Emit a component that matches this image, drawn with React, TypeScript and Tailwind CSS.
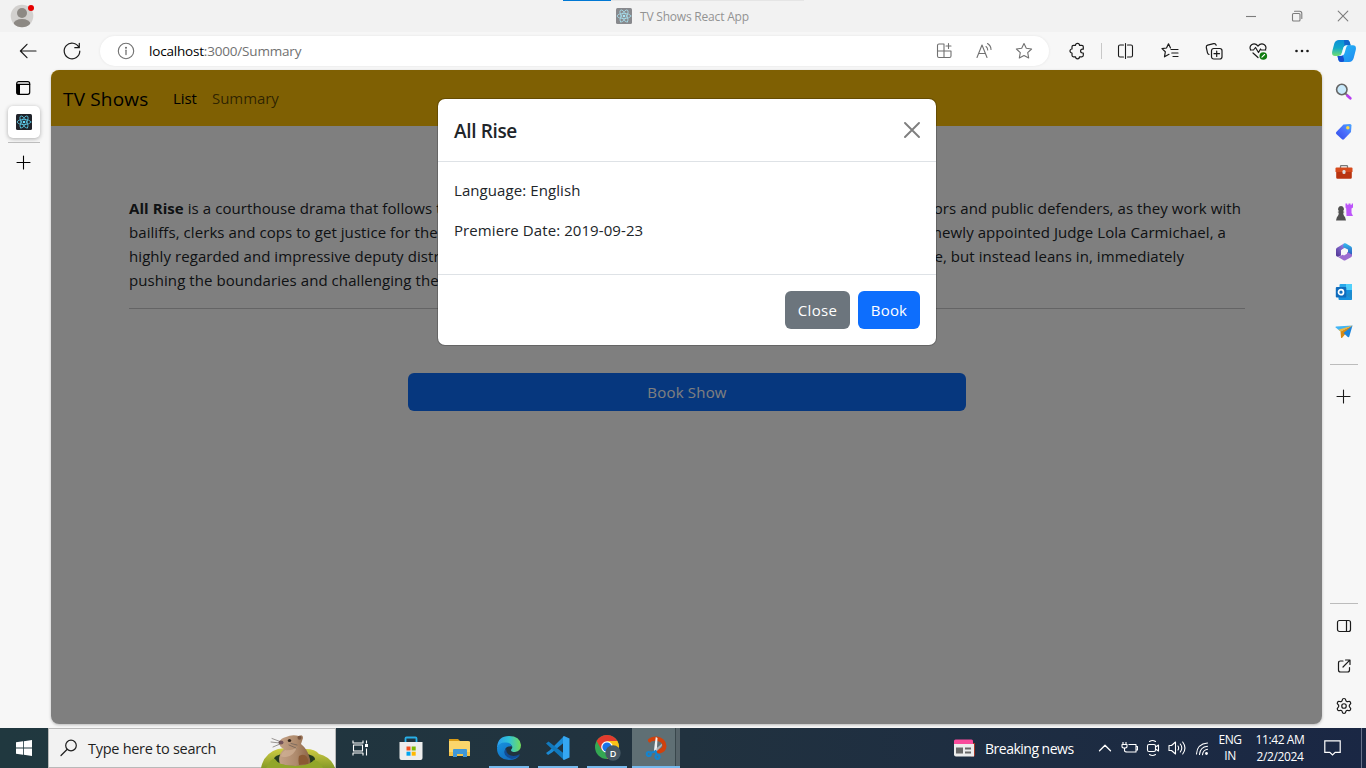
import React from "react";
import { Settings } from "lucide-react";

type IconProps = { w?: number; h?: number; vb?: string; className?: string; children: React.ReactNode };

function Icon({ w = 20, h = 20, vb, className = "", children }: IconProps) {
  return (
    <svg
      width={w}
      height={h}
      viewBox={vb ?? `0 0 ${w} ${h}`}
      fill="none"
      stroke="currentColor"
      strokeWidth={1.1}
      strokeLinecap="round"
      strokeLinejoin="round"
      className={`shrink-0 ${className}`}
    >
      {children}
    </svg>
  );
}

function ReactLogo({ className = "" }: { className?: string }) {
  return (
    <Icon w={16} h={16} className={className}>
      <rect width="16" height="16" rx="1.5" fill="#20232a" stroke="none" />
      <g stroke="#5cc8e4" strokeWidth="0.8">
        <ellipse cx="8" cy="8" rx="6.8" ry="2.6" />
        <ellipse cx="8" cy="8" rx="6.8" ry="2.6" transform="rotate(60 8 8)" />
        <ellipse cx="8" cy="8" rx="6.8" ry="2.6" transform="rotate(120 8 8)" />
      </g>
      <circle cx="8" cy="8" r="1.3" fill="#61dafb" stroke="none" />
    </Icon>
  );
}

function TitleBar() {
  return (
    <header className="relative flex h-8 shrink-0 items-center bg-[#f2f2f2]">
      <div className="absolute top-0 left-[563px] flex h-px w-[241px] bg-[#e5e5e5]">
        <div className="w-12 bg-[#0078d4]" />
      </div>
      <div className="flex w-[616px] pl-[10px]">
        <Icon w={26} h={26}>
          <g stroke="none">
            <clipPath id="face"><circle cx="12" cy="13" r="11.3" /></clipPath>
            <circle cx="12" cy="13" r="11.3" fill="#d2d0ce" />
            <g fill="#8d8984" clipPath="url(#face)">
              <circle cx="12" cy="10" r="5" />
              <ellipse cx="12" cy="21" rx="8.4" ry="5" />
            </g>
            <circle cx="21" cy="5" r="3" fill="#e60000" />
          </g>
        </Icon>
      </div>
      <ReactLogo className="opacity-50" />
      <span className="ml-2 flex-1 pt-[2px] text-[12px] leading-4 tracking-[-0.2px] text-[#929292]">TV Shows React App</span>
      <div className="flex text-[#7c7c7c]">
        <span className="flex w-[46px] justify-center"><Icon w={12} h={12}><path d="M1 6.5h10" strokeLinecap="butt" /></Icon></span>
        <span className="flex w-[46px] justify-center">
          <Icon w={12} h={12}><rect x="1.5" y="3.5" width="7.5" height="7.5" rx="1" /><path d="M3.5 1.3h5.2q2.1 0 2.1 2.1v5" /></Icon>
        </span>
        <span className="flex w-[46px] justify-center"><Icon w={12} h={12}><path d="M1.2 1.2l9.6 9.6M10.8 1.2l-9.6 9.6" /></Icon></span>
      </div>
    </header>
  );
}

function Copilot() {
  return (
    <Icon w={24} h={24}>
      <defs>
        <linearGradient id="cp1" x1="0" y1="0" x2="0" y2="1"><stop stopColor="#0d8ed8" /><stop offset=".5" stopColor="#12a9c9" /><stop offset="1" stopColor="#72dd70" /></linearGradient>
        <linearGradient id="cp2" x1="0" y1="0" x2="1" y2="1"><stop stopColor="#25bdf5" /><stop offset="1" stopColor="#2089f2" /></linearGradient>
      </defs>
      <g stroke="none">
        <path d="M7 1h8q2 0 2.600 2l1 3.500h-4q-2.300 0-3 2l-2 6q-.8 2.500-3 2.500H3Q-.8 17 .3 12l2-7.500Q3.400 1 7 1z" fill="url(#cp1)" />
        <path d="M12 1h3q2.200 0 2.800 2.200l.9 3.300h-3.200q-2.300 0-2.900 2z" fill="#1267cc" />
        <path d="M17 23H9q-2 0-2.600-2L5.500 17q3.200.5 4.300-2.500l2-6q.7-2.200 3-2.200H21q3.800 0 2.700 5l-2 7.700Q20.600 23 17 23z" fill="url(#cp2)" />
        <path d="M5.500 17q3.700.4 4.700-2.800L12 20q.7 3-2 3H9q-2 0-2.600-2z" fill="#174fd0" />
        <path d="M11.200 9.200q.9-3 3.300-3H16q-1.200.4-1.800 2.300l-1.700 5.700q-.8 2.800-3.500 2.800H6.500q2.600-.3 3.300-2.800z" fill="#f4fbff" />
      </g>
    </Icon>
  );
}

const cell = "flex w-11 shrink-0 justify-center";

function Toolbar() {
  return (
    <div className="flex h-[38px] shrink-0 items-center bg-[#f7f7f7] pl-[6px] text-[#1b1b1b]">
      <span className={cell}><Icon><path d="M2.600 10H18M9 3.300L2.400 10 9 16.700" strokeWidth="1.2" /></Icon></span>
      <span className={cell}>
        <Icon><path d="M17 6.500A7.800 7.800 0 1 0 17.800 10M17.300 2.300v4.400h-4.500" strokeWidth="1.2" /></Icon>
      </span>
      <div className="ml-[6px] flex h-[30px] w-[949px] items-center rounded-full bg-white pr-[5px] pl-4 text-[#717171] shadow-[0_0_3px_rgba(0,0,0,0.08)]">
        <Icon><circle cx="10" cy="10" r="7.700" /><path d="M10 9.200v4.300" strokeWidth="1.3" /><circle cx="10" cy="6.800" r=".5" fill="currentColor" /></Icon>
        <span className="ml-[13px] flex-1 text-[13.500px] leading-5 tracking-[-0.19px]">
          <span className="text-black">localhost</span>:3000/Summary
        </span>
        <span className="flex w-10 justify-center">
          <Icon><path d="M10 3H5Q3.500 3 3.500 4.500v10.500Q3.500 16.500 5 16.500h10.500q1.500 0 1.500-1.500v-5H3.500M10 3v13.500M14.500 2.500v5M12 5h5" /></Icon>
        </span>
        <span className="flex w-10 justify-center">
          <Icon><path d="M3 16.500L8 4l5 12.500M4.700 12.500h6.600M12 5.500q1.700 1.200 1.700 3.500M13.500 2.500q3.500 2.300 3.500 6" /></Icon>
        </span>
        <span className="flex w-10 justify-center">
          <Icon><path d="M10 2.500l2.300 4.800 5.300.7-3.900 3.700 1 5.300L10 14.500 5.300 17l1-5.300L2.400 8l5.300-.7z" /></Icon>
        </span>
      </div>
      <span className={`${cell} ml-[6px]`}>
        <Icon><path d="M6.500 4.300h2a2 2 0 0 1 4 0h2.300q1.500 0 1.500 1.500v2.400h-.8a1.900 1.900 0 0 0 0 3.800h.8v2.300q0 1.500-1.500 1.500h-2.300a2 2 0 0 1-4 0h-2Q5 15.800 5 14.300V12a2 2 0 0 1 0-4V5.800q0-1.500 1.500-1.500z" strokeWidth="1.2" /></Icon>
      </span>
      <span className="mx-[2px] h-4 w-px bg-[#c8c8c8]" />
      <span className={cell}>
        <Icon><path d="M7.500 4H4Q2.500 4 2.500 5.500v9Q2.500 16 4 16h3.500M11.500 4H15q1.500 0 1.500 1.500v9q0 1.500-1.500 1.500h-3.500M9.500 2.500v15" strokeWidth="1.1" /></Icon>
      </span>
      <span className={cell}>
        <Icon><path d="M10.500 7L8.500 2.800 6.500 7 2 7.600l3.300 3.200-.8 5L9 13.300M11 8.500h7M11.800 12h6.200M13 15.500h5" strokeWidth="1.2" /></Icon>
      </span>
      <span className={cell}>
        <Icon>
          <g strokeWidth="1.2"><rect x="7.500" y="7.500" width="10.500" height="10.500" rx="2.200" /><path d="M12.700 10v5.500M10 12.700h5.500M5 13.500q-1.200-.5-1.500-1.700L2.300 6.500q-.3-1.800 1.400-2.300l6-1.600q1.800-.4 2.500 1.600" /></g>
        </Icon>
      </span>
      <span className={cell}>
        <Icon>
          <path d="M2.700 9Q1 5.700 3.600 3.700 7 1.600 10 5q3-3.400 6.400-1.300Q19 5.700 17.300 9M2.500 9h3l2-2.500 3 5 2-3.500.7 1h4.500M5 12l5 4.500" strokeWidth="1.2" />
          <circle cx="15.300" cy="15" r="3.800" fill="#107c10" stroke="none" />
          <path d="M13.900 16.200l2.700-2.700" stroke="#fff" />
        </Icon>
      </span>
      <span className={cell}>
        <Icon><g fill="currentColor" stroke="none"><circle cx="4.500" cy="10" r="1.300" /><circle cx="10" cy="10" r="1.300" /><circle cx="15.500" cy="10" r="1.300" /></g></Icon>
      </span>
      <span className="flex w-10 justify-center"><Copilot /></span>
    </div>
  );
}

function Plus() {
  return <Icon w={16} h={16}><path d="M7.500 2v13M1 8.500h13" strokeWidth="1.100" /></Icon>;
}

function LeftRail() {
  return (
    <aside className="flex w-[51px] shrink-0 flex-col pt-2 pl-2">
      <span className="flex h-7 w-[30px] items-start justify-center pt-[2px]">
        <Icon w={16} h={16}><rect x="1.700" y="1.700" width="13" height="12.600" rx="2" strokeWidth="1.200" /><path d="M1.700 4.300h13" strokeWidth="1.200" /><path d="M1.500 4h3.500v10.500H3q-1.500 0-1.500-1.500z" fill="#000" stroke="none" /></Icon>
      </span>
      <span className="flex size-8 items-center justify-center rounded-[5px] bg-white shadow-[0_1px_4px_rgba(0,0,0,0.3)]"><ReactLogo /></span>
      <span className="mt-1 h-px w-8 bg-[#bdbdbd]" />
      <span className="mt-[11px] flex w-8 justify-center"><Plus /></span>
    </aside>
  );
}

function RightRail() {
  const row = "flex h-10 w-[27px] items-center justify-center";
  return (
    <aside className="flex w-11 shrink-0 flex-col pt-[2px] pl-2 text-[#1b1b1b]">
      <span className={row}>
        <Icon w={18} h={18}>
          <path d="M11 11l2 2" stroke="#777" strokeWidth="2" /><path d="M12.500 12.700l2.800 2.600" stroke="#b83ff0" strokeWidth="2.800" />
          <circle cx="6.800" cy="6.500" r="5.200" fill="#c8e9fb" stroke="#666" strokeWidth="1.600" />
        </Icon>
      </span>
      <span className={row}>
        <Icon w={18} h={18}>
          <defs><linearGradient id="tag" x1="0" y1="1" x2="1" y2="0"><stop stopColor="#2d4ee8" /><stop offset=".5" stopColor="#4b6bfa" /><stop offset="1" stopColor="#4aa8ff" /></linearGradient></defs>
          <path d="M8.500 1.500L15 1q1.500 0 1.500 1.500L16 9 9 16.300q-1 .9-2 0L1.300 11q-.9-1 0-2z" fill="url(#tag)" stroke="none" />
          <circle cx="12.800" cy="4.800" r="1.700" fill="#ffd942" stroke="none" />
        </Icon>
      </span>
      <span className={row}>
        <Icon w={18} h={18}>
          <path d="M5.500 5V3.500Q5.500 2.700 6.300 2.700h5.400q.8 0 .8.800V5" stroke="#777" strokeWidth="1.300" />
          <path d="M1.500 4.500h15q1 0 1 1V9H.5V5.500q0-1 1-1z" fill="#d64a1c" stroke="none" />
          <path d="M1.200 9h15.600v5.500q0 1.300-1.300 1.300h-13q-1.300 0-1.300-1.300z" fill="#b93410" stroke="none" />
          <rect x="7.500" y="7" width="3" height="4" rx="1.300" fill="#ddd" stroke="none" />
        </Icon>
      </span>
      <span className={row}>
        <Icon w={18} h={18}>
          <path d="M10.500.5h1.700v1.300h1.300V.5h2v1.300h1.300V.5h1.200v4l-1.500 1V10l1.500 3h-6.500l-.3-7.500-.7-1z" fill="#bd55fa" stroke="none" />
          <path d="M6 3a3 3 0 0 1 2 5.200l1.500.8-1.300.8q-.1 3 2 4.700l.8 3H1l.8-3q2.100-1.700 2-4.700L2.500 9 4 8.200A3 3 0 0 1 6 3z" fill="#505050" stroke="none" />
        </Icon>
      </span>
      <span className={row}>
        <Icon w={18} h={18}>
          <defs>
            <linearGradient id="m1" x1="0" y1="1" x2="1" y2="0"><stop stopColor="#4c318e" /><stop offset="1" stopColor="#a58cf5" /></linearGradient>
            <linearGradient id="m2" x1="0" y1="0" x2="0" y2="1"><stop stopColor="#35bcef" /><stop offset="1" stopColor="#2a4fb8" /></linearGradient>
          </defs>
          <g stroke="none">
            <path d="M9 .5L2 4.700Q1 5.300 1 6.500v6q1.200 2 3 1l2-1V7.300L11 4V1z" fill="url(#m1)" />
            <path d="M9 .5q1-.5 2 0l5 3q1 .7 1 2V13l-4-1V6.500L8 4Q8 1.500 9 .5z" fill="url(#m2)" />
            <path d="M1.500 13q1.500 1.500 3.500.2L12 9l5 2.500v1q0 1-1 1.700l-5.500 3q-1 .6-2 0z" fill="#9c6cd0" />
            <path d="M9 5.500l3 1.800v3.400l-3 1.800-3-1.800V7.300z" fill="#f7f7f7" />
          </g>
        </Icon>
      </span>
      <span className={row}>
        <Icon w={18} h={18}>
          <rect x="4.500" y="1" width="12.500" height="7" rx="1" fill="#28a8ea" stroke="none" /><rect x="11" y="1" width="6" height="6" fill="#50d0fb" stroke="none" />
          <path d="M3.500 7H17v9q0 1-1 1H4.500q-1 0-1-1z" fill="#1490df" stroke="none" /><path d="M10.500 12L17 8v9z" fill="#28a8ea" stroke="none" /><path d="M10.500 12l6.500 4.500V8z" fill="#0a5a9c" fillOpacity=".35" stroke="none" />
          <rect x=".8" y="4" width="10.500" height="10.500" rx="1" fill="#0f6cbd" stroke="none" /><circle cx="6" cy="9.200" r="2.500" stroke="#fff" strokeWidth="1.700" />
        </Icon>
      </span>
      <span className={row}>
        <Icon w={18} h={18}>
          <g stroke="none"><path d="M17.500 2.500L1 3.500q-1 .3-.3 1l4.800 4z" fill="#42b5f5" /><path d="M17.500 2.500L5.500 8.500l.5 6q.4 1 1.200.2l2.500-3z" fill="#d88a13" /><path d="M17.500 2.500L8.500 10l4.300 4q1 .8 1.500-.4z" fill="#1b84dc" /><path d="M17.500 2.500L3.500 6.800l2 1.700z" fill="#f3b93a" /></g>
        </Icon>
      </span>
      <span className="mt-3 h-px w-7 bg-[#bcbcbc]" />
      <span className="mt-[23px] flex w-7 justify-center"><Plus /></span>
      <span className="mt-auto h-px w-7 bg-[#bcbcbc]" />
      <div className="mt-[2px] mb-[2px] flex flex-col">
        <span className="flex h-10 w-7 items-center justify-center"><Icon w={16} h={16}><rect x="1.500" y="2.500" width="13" height="11" rx="2" strokeWidth="1.200" /><path d="M10.500 2.500v11" strokeWidth="1.200" /></Icon></span>
        <span className="flex h-10 w-7 items-center justify-center"><Icon w={16} h={16}><path d="M7 3H4.500Q2.500 3 2.500 5v7q0 2 2 2h7q2 0 2-2V9.500M9.500 2h4.500v4.500M13.800 2.200L7 9" strokeWidth="1.200" /></Icon></span>
        <span className="flex h-10 w-7 items-center justify-center"><Settings size={18} strokeWidth={1.600} /></span>
      </div>
    </aside>
  );
}

function ShowPage() {
  return (
    <main className="relative h-[654px] w-[1271px] shrink-0 overflow-hidden rounded-lg bg-white font-['Open_Sans','Noto_Sans',sans-serif] shadow-[0_1px_3px_rgba(0,0,0,0.25)]">
      <nav className="flex h-14 items-center bg-[#ffc107] pt-px pl-3 text-black/65">
        <span className="w-[110px] text-[19px] leading-[30px] tracking-[0.18px] text-black">TV Shows</span>
        <span className="w-[39px] text-[15px] tracking-[-0.1px] text-black">List</span>
        <span className="text-[15px] tracking-[-0.05px]">Summary</span>
      </nav>
      <section className="ml-[78px] w-[1116px] pt-[70px] text-[15px] leading-6 tracking-[0.07px] whitespace-nowrap text-[#212529]">
        <p className="flex w-[1112px] justify-between"><span><b>All Rise</b> is a courthouse drama that follows the</span><span>prosecutors and public defenders, as they work with</span></p>
        <p className="flex w-[1097px] justify-between"><span>bailiffs, clerks and cops to get justice for the</span><span>newly appointed Judge Lola Carmichael, a</span></p>
        <p className="flex w-[1055px] justify-between"><span>highly regarded and impressive deputy district</span><span>role, but instead leans in, immediately</span></p>
        <p>pushing the boundaries and challenging the</p>
        <hr className="mt-4 border-[#c8c9ca]" />
        <button className="mt-16 ml-[279px] h-[38px] w-[558px] rounded-md bg-[#0d6efd] tracking-[0.2px] text-white">Book Show</button>
      </section>
      <div className="absolute inset-0 bg-black/50">
        <div className="mt-[28px] ml-[386px] flex w-[500px] flex-col rounded-lg border border-black/20 bg-white bg-clip-padding text-[15px] leading-6 tracking-[0.08px] text-[#212529]">
          <div className="flex h-[63px] items-center justify-between border-b border-[#dee2e6] px-4">
            <h5 className="pt-[2px] text-[19px] leading-[30px] font-semibold tracking-[-0.35px]">All Rise</h5>
            <Icon w={16} h={16} className="text-[#7f7f7f]"><path d="M1 1l14 14M15 1L1 15" strokeWidth="1.900" /></Icon>
          </div>
          <div className="flex h-[113px] flex-col gap-4 border-b border-[#dee2e6] px-4 pt-4">
            <p>Language: English</p>
            <p>Premiere Date: 2019-09-23</p>
          </div>
          <div className="flex h-[70px] items-center justify-end gap-2 px-4 text-white">
            <button className="h-[38px] w-[65px] rounded-md bg-[#6c757d] font-medium tracking-[0.3px]">Close</button>
            <button className="h-[38px] w-[62px] rounded-md bg-[#0d6efd] font-medium tracking-[0.2px]">Book</button>
          </div>
        </div>
      </div>
    </main>
  );
}

function Groundhog() {
  return (
    <Icon w={74} h={34}>
      <defs>
        <linearGradient id="fur" x1="0" y1="0" x2="1" y2="0"><stop stopColor="#c3a186" /><stop offset=".55" stopColor="#ae8a6c" /><stop offset="1" stopColor="#8b6245" /></linearGradient>
        <linearGradient id="grass" x1="0" y1="0" x2="0" y2="1"><stop stopColor="#d3cf45" /><stop offset="1" stopColor="#869a28" /></linearGradient>
      </defs>
      <g stroke="none">
        <path d="M0 34Q3 19 17 15q14-3 28 0 9 0 13 5 12 3 16 14z" fill="url(#grass)" />
        <ellipse cx="33.500" cy="25" rx="20.500" ry="6.500" fill="#24391f" />
        <path d="M18 8q2-4 7-5 6-3 13-1 4-2 4 2-1 3-2 6 6 5 8 12 2 5 1 8-14 4-30 0-3-8 4-15-5-2-5-7z" fill="url(#fur)" />
        <path d="M24 16q7 1 12-3-3 9-11 10-5 0-5-1 1-4 4-6z" fill="#d0b095" fillOpacity=".7" />
        <path d="M38 22q5-3 8 1 2 4 1 7l-9 1q-1-5 0-9z" fill="#8b5a34" />
        <ellipse cx="20" cy="8.500" rx="2.500" ry="2" fill="#75545a" /><ellipse cx="28.500" cy="6.500" rx="1.700" ry="1.500" fill="#30221a" /><circle cx="38.500" cy="3.800" r="2" fill="#77543f" />
        <path d="M8 29Q12 24 14 25q4 7 20 7 14 0 19-6 6 1 9 8H5z" fill="#91a62a" />
      </g>
      <path d="M19 7.500L11 4.500M18.500 9L10 8M19 10l-7 3M28 11l7 3M30 9.500l6 1.500" stroke="#5a5451" strokeWidth=".6" />
    </Icon>
  );
}

function TaskbarApps() {
  const slot = "flex h-10 w-[49px] shrink-0 items-center justify-center";
  const open = "flex h-10 w-10 shrink-0 items-center justify-center border-b-2 border-[#76b9ed] pt-[2px]";
  return (
    <>
      <span className={`${slot} ml-px`}>
        <Icon w={24} h={26}>
          <path d="M6.500 7V3.500q0-1 1-1h9q1 0 1 1V7" stroke="#28afe8" strokeWidth="1.800" />
          <path d="M.5 7h23v16q0 2-2 2h-19q-2 0-2-2z" fill="#ededed" stroke="none" />
          <g stroke="none"><path d="M7.500 11.500h4v4h-4z" fill="#f25022" /><path d="M12.700 11.500h4v4h-4z" fill="#7fba00" /><path d="M7.500 16.700h4v4h-4z" fill="#00a4ef" /><path d="M12.700 16.700h4v4h-4z" fill="#ffb900" /></g>
        </Icon>
      </span>
      <span className={slot}>
        <Icon w={22} h={20}>
          <g stroke="none"><path d="M0 1h9l2 2H0z" fill="#d99b16" /><path d="M0 3h19q2 0 2 1v14H0z" fill="#fbd56b" /><path d="M0 14h21v4H0z" fill="#f3c24a" /><path d="M4 19v-7q0-1 1-1h12q1 0 1 1v7h-4v-3H8v3z" fill="#3f97d9" /></g>
        </Icon>
      </span>
      <span className={`${open} ml-[5px]`}>
        <Icon w={24} h={24}>
          <defs>
            <linearGradient id="e1" x1="0" y1="0" x2="1" y2="0"><stop stopColor="#2a9cf0" /><stop offset=".5" stopColor="#30c3d6" /><stop offset="1" stopColor="#73dc5a" /></linearGradient>
            <linearGradient id="e2" x1="0" y1="0" x2="1" y2="1"><stop stopColor="#1793df" /><stop offset="1" stopColor="#1060b5" /></linearGradient>
          </defs>
          <g stroke="none">
            <path d="M0 11Q1 0 12 0q11 0 12 9 0 6-6 7-4 0-4-2 2-2 1-4-2-3-6-3-6 0-9 5z" fill="url(#e1)" />
            <path d="M0 12Q2 6 9 6.500q5 0 6 4-5-1-7 3-2 8 9 8 3-.3 6-3-3 5.500-11 5.500Q0 23 0 12z" fill="url(#e2)" />
            <path d="M9 12q-5 8 6 11 5-1 8-5-7 4-12 0-2-2-2-6z" fill="#124c96" />
          </g>
        </Icon>
      </span>
      <span className={`${open} ml-[9px]`}>
        <Icon w={24} h={24}>
          <g stroke="none"><path d="M18 0L3.500 14.500 0 17l2 2 4-2.500L18 6.500z" fill="#1b8ad4" /><path d="M0 7.500l2.500-2L18 17.500V24z" fill="#1179bd" /><path d="M18 0l5.500 2.500v19L18 24q-1-.5-1-1V1z" fill="#35a7f2" /></g>
        </Icon>
      </span>
      <span className={`${open} ml-[9px] pl-[2px]`}>
        <Icon w={26} h={26}>
          <g stroke="none">
            <circle cx="12" cy="12" r="12" fill="#34a853" /><path d="M12 12L1.600 6A12 12 0 0 1 22.400 6z" fill="#e33b2e" /><path d="M1.600 6L7 15.500 12 12V6z" fill="#e33b2e" /><path d="M12 6h10.400A12 12 0 0 1 12 24l5-9z" fill="#fbc116" />
            <circle cx="12" cy="12" r="5.800" fill="#fff" /><circle cx="12" cy="12" r="4.600" fill="#1a73e8" /><circle cx="18" cy="18" r="7.700" fill="#465864" />
          </g>
          <text x="18" y="21.500" textAnchor="middle" fontSize="9" fontFamily="Open Sans" fontWeight="600" fill="#fff" stroke="none">D</text>
        </Icon>
      </span>
      <span className="ml-[5px] flex h-10 w-12 shrink-0 border-b-2 border-[#76b9ed]">
        <span className="flex w-[44px] items-center justify-center border-r border-[#39474c] bg-[#5f6f74] pt-[2px] pl-[5px]">
          <Icon w={22} h={24}>
            <path fillRule="evenodd" d="M3 3.500Q6 .3 12 .5q9 1.500 9.500 9.500-.5 6-6 7.300-3 .3-5-1.800l1-2.500q6 .5 6-4-1-4-7-4.300-4.500 0-5.500 2Q2.500 6 3 3.500z" fill="#d1410c" stroke="none" />
            <path d="M10.800 1l1.700 1-.7 13-3 1.200q.8-8 2-15.200z" fill="#eef1f3" stroke="none" />
            <path d="M17 7.500q.5 2-1 3.500l-4.500 4.500.3-3.500z" fill="#a9b0b4" stroke="none" />
            <g stroke="#1683cd" strokeWidth="2.200"><circle cx="3.800" cy="18" r="2" /><circle cx="12.500" cy="20.800" r="2" /><path d="M5.500 16.700l4.500-1.200M11.700 18.500L10.500 15" /></g>
          </Icon>
        </span>
        <span className="flex-1 bg-[#566369]" />
      </span>
    </>
  );
}

function Taskbar() {
  return (
    <footer className="flex h-10 shrink-0 items-center bg-linear-to-r from-[#20383f] via-[#21323f] to-[#1a2744] text-white">
      <span className="flex w-12 justify-center">
        <Icon w={16} h={16}><g fill="#fff" stroke="none"><path d="M0 2.300l7-1v6.300H0zM7.800 1.200L16 0v7.600H7.800zM0 8.400h7v6.300l-7-1zM7.800 8.400H16V16l-8.200-1.200z" /></g></Icon>
      </span>
      <div className="flex h-10 w-72 items-center border border-[#b9b9b9] bg-[#f2f2f2] pl-[11px] text-[#1f1f1f]">
        <Icon w={18} h={18}><circle cx="11" cy="6.500" r="5.300" strokeWidth="1.200" /><path d="M7 10.500L1 16.500" strokeWidth="1.200" /></Icon>
        <span className="ml-[10px] flex-1 pt-[2px] text-[14.500px] leading-5 tracking-[-0.28px]">Type here to search</span>
        <span className="mt-[5px] self-start"><Groundhog /></span>
      </div>
      <span className="flex w-[49px] justify-center">
        <Icon w={17} h={16}><path d="M1 .5v2.500h10V.5M1 15.500V13h10v2.500M1.500 5h9v6h-9zM14.500.5v3M14.500 8.500v7" strokeLinecap="butt" /><path d="M13 4h3v3h-3z" fill="#fff" stroke="none" /></Icon>
      </span>
      <TaskbarApps />
      <span className="ml-[273px] flex w-8 shrink-0">
        <Icon w={23} h={18}>
          <g stroke="none"><path d="M19 4h3v12q0 1.500-2 1.500h-2z" fill="#a43725" /><path d="M1 5V2Q1 .5 2.500.5h16Q20 .5 20 2v3z" fill="#f94b9b" /><path d="M1 5h20v12.500H3q-2 0-2-2z" fill="#ececec" /><path d="M3 8.500h7v6H3zM12 8.500h6v2h-6zM12 12.500h6v2h-6z" fill="#686868" /></g>
        </Icon>
      </span>
      <span className="w-[106px] shrink-0 pt-px text-[14px] leading-5 tracking-[-0.5px]">Breaking news</span>
      <span className="flex w-[27px] shrink-0 justify-center"><Icon w={14} h={14}><path d="M1.500 9.800L7 4.300l5.500 5.500" strokeWidth="1.300" /></Icon></span>
      <span className="-ml-px flex w-6 shrink-0 justify-center"><Icon w={17} h={14}><path d="M7.500 3.500H15v7.500H6.500M15.500 5.500h1v3.500h-1M2 1v2.500M5 1v2.500M1 3.500h5v2Q6 7 3.500 7 1 7 1 5.500zM3.500 7v2.500q0 1.500 3 1.500" strokeLinecap="butt" /></Icon></span>
      <span className="flex w-6 shrink-0 justify-center"><Icon w={14} h={18}><rect x="1.500" y="5.500" width="8" height="7" rx="1.500" /><path d="M9.500 8l3-2v6l-3-2M3.500 2.500q3-2 6 0M3.500 15.500q3 2 6 0" /></Icon></span>
      <span className="flex w-6 shrink-0 justify-center"><Icon w={18} h={16}><path d="M1 5.500h2.500l4-3.500v12l-4-3.500H1zM10 6q1.300 2 0 4M12.300 4q3 4 0 8M14.700 2q4.500 6 0 12" /></Icon></span>
      <span className="flex w-[26px] shrink-0 justify-center"><Icon w={15} h={15}><path d="M1.500 13Q2 3 12.500 2M4.500 13.500Q5 6 12.500 5.200M7.500 13.800Q8 9 12.500 8.300" /><circle cx="11.500" cy="12.500" r="1.400" fill="#fff" stroke="none" /></Icon></span>
      <span className="-ml-px flex w-8 shrink-0 flex-col text-center text-[12px] leading-4 tracking-[-0.4px]"><span>ENG</span><span>IN</span></span>
      <span className="flex w-[68px] shrink-0 flex-col text-center text-[12px] leading-4 tracking-[-0.4px]"><span className="mb-px">11:42 AM</span><span>2/2/2024</span></span>
      <span className="flex w-9 shrink-0 justify-center"><Icon w={17} h={16}><path d="M.8.8h15.400v11.500h-5L8.500 15l-2.700-2.700h-5z" strokeLinejoin="miter" strokeWidth="1.200" /></Icon></span>
      <span className="mr-1 ml-auto h-10 w-px bg-[#68728a]" />
    </footer>
  );
}

export default function App() {
  return (
    <div className="flex h-[768px] w-[1366px] flex-col overflow-hidden bg-[#f7f7f7] font-['Open_Sans','Noto_Sans',sans-serif]">
      <TitleBar />
      <Toolbar />
      <div className="flex min-h-0 flex-1">
        <LeftRail />
        <ShowPage />
        <RightRail />
      </div>
      <Taskbar />
    </div>
  );
}
